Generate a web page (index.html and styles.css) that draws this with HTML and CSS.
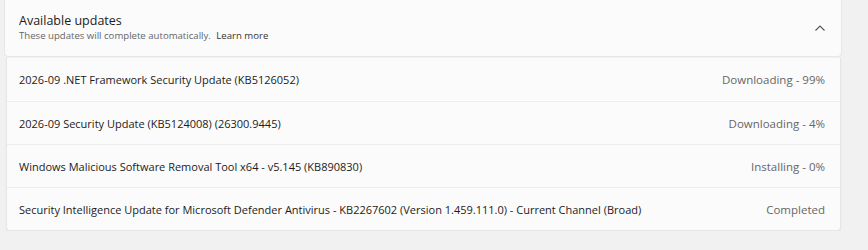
FILE: index.html
```html
<!DOCTYPE html>
<html>
<head>
<meta charset="utf-8">
<link rel="stylesheet" href="styles.css">
</head>
<body>
<div class="panel">
  <div class="header">
    <div class="titles">
      <div class="title">Available updates</div>
      <div class="subtitle">These updates will complete automatically. <span class="link">Learn more</span></div>
    </div>
    <svg class="chevron" width="12" height="8" viewBox="0 0 12 8"><path d="M1.5 6.5 L6 2 L10.5 6.5" fill="none" stroke="#555" stroke-width="1.1"/></svg>
  </div>
  <div class="list">
    <div class="row"><span class="name">2026-09 .NET Framework Security Update (KB5126052)</span><span class="status">Downloading - 99%</span></div>
    <div class="row"><span class="name">2026-09 Security Update (KB5124008) (26300.9445)</span><span class="status">Downloading - 4%</span></div>
    <div class="row"><span class="name">Windows Malicious Software Removal Tool x64 - v5.145 (KB890830)</span><span class="status">Installing - 0%</span></div>
    <div class="row"><span class="name">Security Intelligence Update for Microsoft Defender Antivirus - KB2267602 (Version 1.459.111.0) - Current Channel (Broad)</span><span class="status">Completed</span></div>
  </div>
</div>
</body>
</html>
```
FILE: styles.css
```css
html, body {
  margin: 0;
  padding: 0;
  background: #f1f1f1;
  font-family: "Open Sans", "Noto Sans", sans-serif;
  color: #1b1b1b;
}
.panel {
  width: 838px;
  margin-left: 4px;
  margin-top: -6px;
}
.header {
  display: flex;
  align-items: center;
  justify-content: space-between;
  height: 63px;
  box-sizing: border-box;
  padding: 5px 15px 0 14px;
  background: #fbfbfb;
  border: 1px solid #e6e6e6;
  border-radius: 4px;
}
.title {
  font-size: 12.5px;
  line-height: 16px;
}
.subtitle {
  font-size: 9.6px;
  line-height: 14px;
  color: #666;
}
.link {
  color: #3a3434;
  margin-left: 3px;
}
.chevron {
  display: block;
}
.list {
  margin: 1px 1px 0 2px;
  background: #fbfbfb;
  border: 1px solid #e6e6e6;
  border-top: none;
  border-radius: 0 0 4px 4px;
  box-shadow: 0 1px 2px rgba(0,0,0,0.06);
}
.row {
  display: flex;
  align-items: center;
  justify-content: space-between;
  height: 42px;
  padding: 0 15px 0 12px;
  font-size: 11px;
  border-top: 1px solid #ececec;
}
.row:first-child {
  border-top: none;
  height: 43px;
}
.status {
  color: #666;
  font-size: 11.5px;
}
```
